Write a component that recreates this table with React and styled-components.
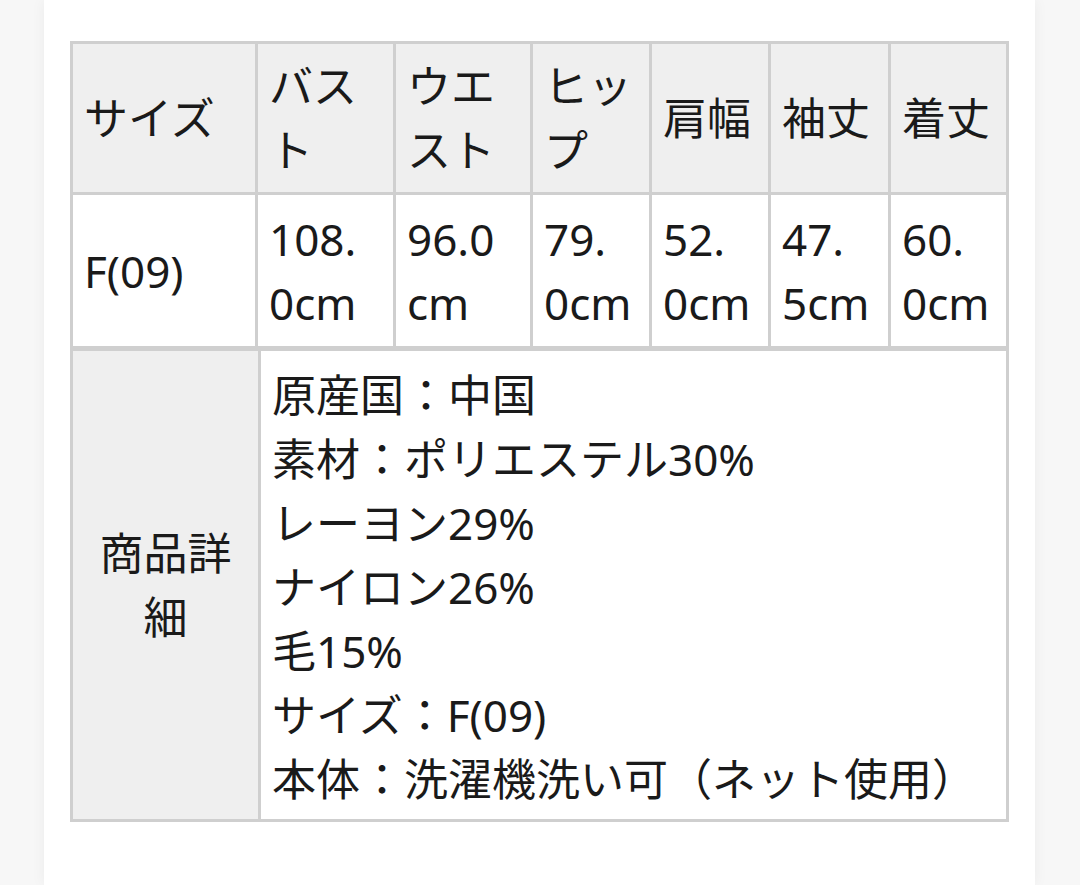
import React from 'react';
import styled, { createGlobalStyle } from 'styled-components';

const GlobalStyle = createGlobalStyle`
  * {
    box-sizing: border-box;
  }
  body {
    margin: 0;
    background: #f7f7f7;
    font-family: "Noto Sans", "Noto Sans CJK JP", sans-serif;
    color: #1a1a1a;
  }
`;

const Page = styled.div`
  display: flex;
  padding-left: 44px;
  min-height: 885px;
`;

const Card = styled.div`
  width: 991px;
  min-height: 885px;
  background: #fff;
  box-shadow: 0 0 14px rgba(0, 0, 0, 0.05);
  padding: 41px 26px 0;
`;

const Table = styled.table`
  width: 939px;
  table-layout: fixed;
  border-collapse: separate;
  border-spacing: 0;
  border-top: ${({ $top }) => $top}px solid #cfcfcf;
  border-left: 3px solid #cfcfcf;
  font-size: 44px;
  line-height: 64px;
`;

const Cell = styled.td`
  width: ${({ $w }) => ($w ? `${$w}px` : 'auto')};
  padding: ${({ $pad }) => $pad || '10px 11px'};
  border-right: 3px solid #cfcfcf;
  border-bottom: 3px solid #cfcfcf;
  background: ${({ $head }) => ($head ? '#efefef' : '#fff')};
  text-align: ${({ $center }) => ($center ? 'center' : 'left')};
  vertical-align: middle;
  font-weight: 400;
  white-space: nowrap;
`;

const Lines = styled.div`
  display: flex;
  flex-direction: column;
`;

const widths = [185, 138, 137, 119, 119, 120, 118];

const heads = [['サイズ'], ['バス', 'ト'], ['ウエ', 'スト'], ['ヒッ', 'プ'], ['肩幅'], ['袖丈'], ['着丈']];
const values = [['F(09)'], ['108.', '0cm'], ['96.0', 'cm'], ['79.', '0cm'], ['52.', '0cm'], ['47.', '5cm'], ['60.', '0cm']];

const details = [
  '原産国：中国',
  '素材：ポリエステル30%',
  'レーヨン29%',
  'ナイロン26%',
  '毛15%',
  'サイズ：F(09)',
  '本体：洗濯機洗い可（ネット使用）',
];

const Multi = ({ lines }) => (
  <Lines>
    {lines.map((l, i) => (
      <span key={i}>{l}</span>
    ))}
  </Lines>
);

export default function App() {
  return (
    <Page>
      <GlobalStyle />
      <Card>
        <Table $top={3}>
          <tbody>
            <tr>
              {heads.map((h, i) => (
                <Cell as="th" key={i} $w={widths[i]} $head>
                  <Multi lines={h} />
                </Cell>
              ))}
            </tr>
            <tr>
              {values.map((v, i) => (
                <Cell key={i} $pad="12px 11px 11px">
                  <Multi lines={v} />
                </Cell>
              ))}
            </tr>
          </tbody>
        </Table>
        <Table $top={2}>
          <tbody>
            <tr>
              <Cell as="th" $w={188} $head $center>
                <Multi lines={['商品詳', '細']} />
              </Cell>
              <Cell $pad="12px 11px 8px">
                <Multi lines={details} />
              </Cell>
            </tr>
          </tbody>
        </Table>
      </Card>
    </Page>
  );
}
